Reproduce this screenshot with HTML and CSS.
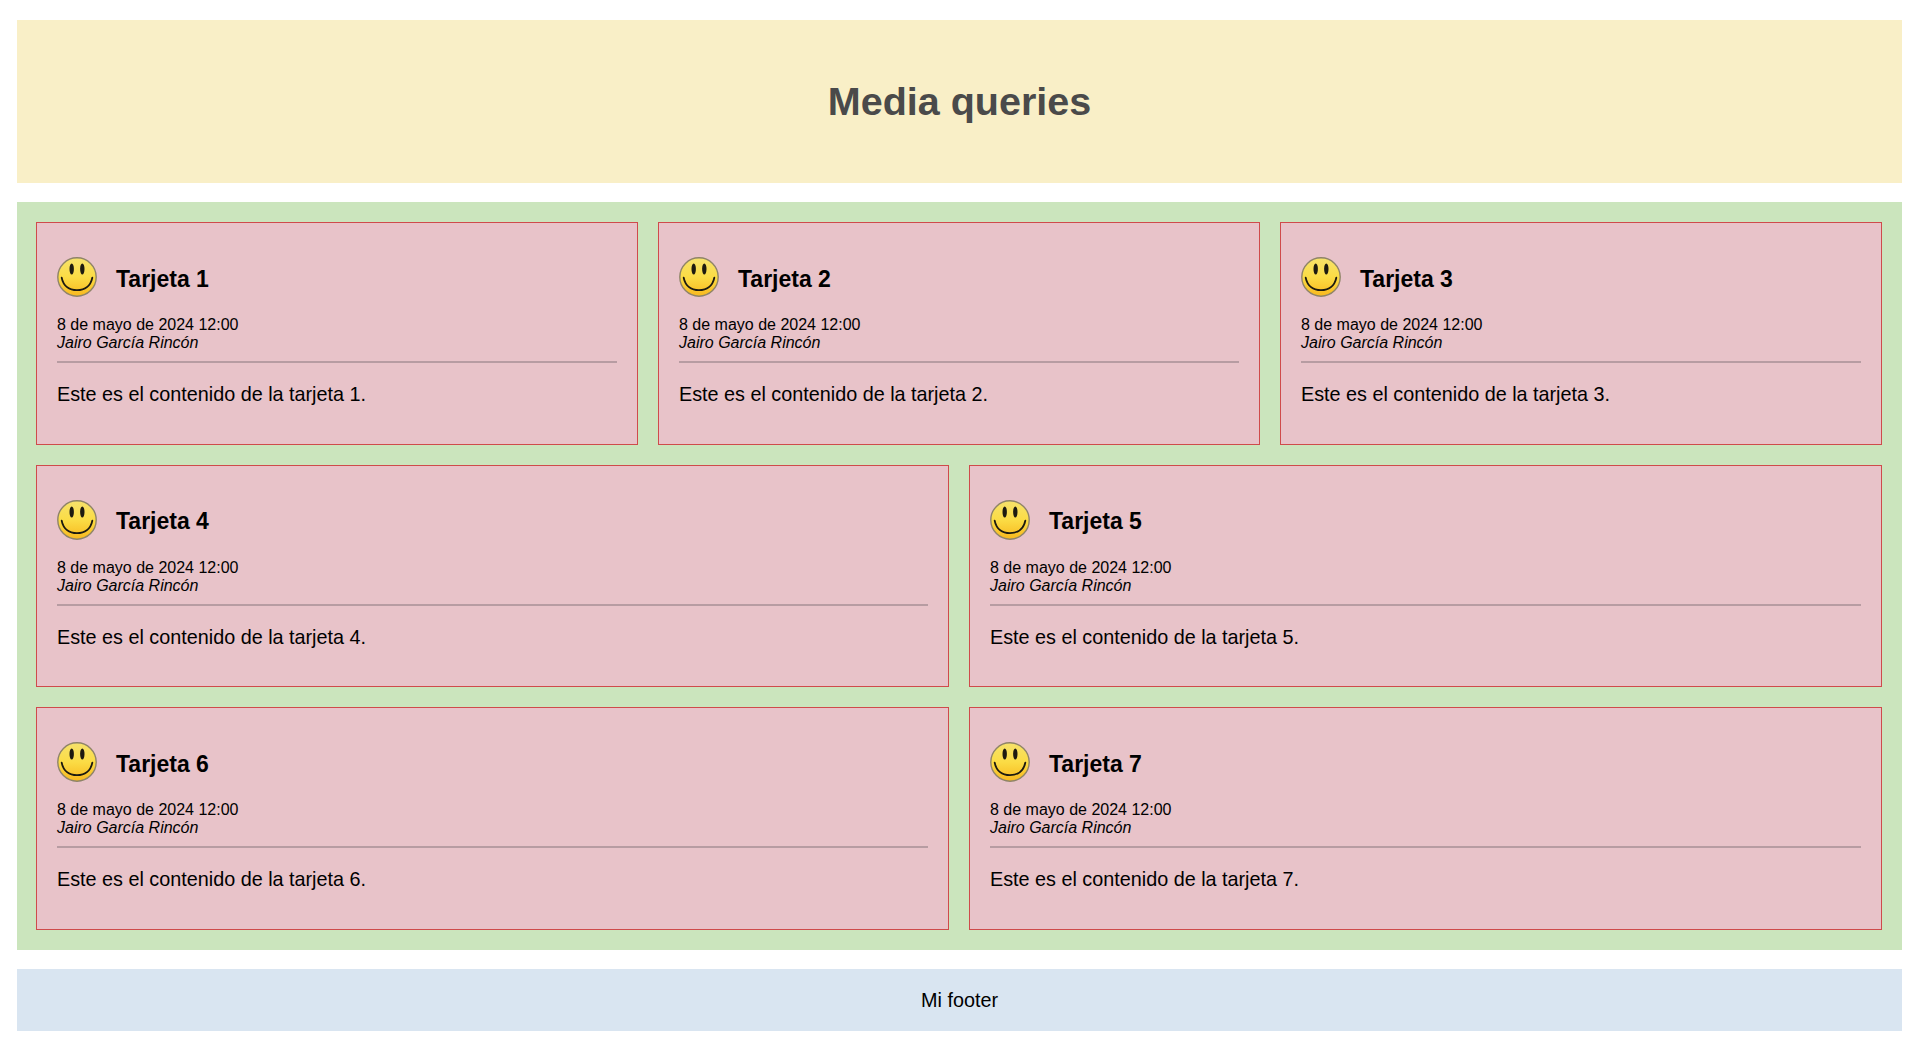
FILE: index.html
```html
<!DOCTYPE html>
<html lang="es">
<head>
  <meta charset="UTF-8">
  <meta name="viewport" content="width=device-width, initial-scale=1.0">
  <title>Media queries</title>
  <link rel="stylesheet" href="styles.css">
</head>
<body>
  <svg class="defs" width="0" height="0">
    <defs>
      <linearGradient id="smile-fill" x1="0" y1="0" x2="0" y2="1">
        <stop offset="0" stop-color="#f6e26b"/>
        <stop offset="0.5" stop-color="#fbdc45"/>
        <stop offset="1" stop-color="#f8b81e"/>
      </linearGradient>
      <symbol id="smile" viewBox="0 0 40 40">
        <circle cx="20" cy="20" r="19.2" fill="url(#smile-fill)" stroke="#8f8468" stroke-width="1.4"/>
        <ellipse cx="14.7" cy="12" rx="2.200" ry="5.500" fill="#1c1a10"/>
        <ellipse cx="25.300" cy="12" rx="2.200" ry="5.500" fill="#1c1a10"/>
        <path d="M4.700 20.700c1.600 8 7.500 12.500 15.300 12.500s13.700-4.500 15.300-12.500" fill="none" stroke="#1c1a10" stroke-width="1.800" stroke-linecap="round"/>
      </symbol>
    </defs>
  </svg>

  <header class="header">
    <h1>Media queries</h1>
  </header>

  <main class="cards">
    <article class="card">
      <div class="card-head"><svg class="avatar"><use href="#smile"/></svg><h2>Tarjeta 1</h2></div>
      <p class="date">8 de mayo de 2024 12:00</p>
      <p class="author">Jairo García Rincón</p>
      <hr>
      <p class="content">Este es el contenido de la tarjeta 1.</p>
    </article>
    <article class="card">
      <div class="card-head"><svg class="avatar"><use href="#smile"/></svg><h2>Tarjeta 2</h2></div>
      <p class="date">8 de mayo de 2024 12:00</p>
      <p class="author">Jairo García Rincón</p>
      <hr>
      <p class="content">Este es el contenido de la tarjeta 2.</p>
    </article>
    <article class="card">
      <div class="card-head"><svg class="avatar"><use href="#smile"/></svg><h2>Tarjeta 3</h2></div>
      <p class="date">8 de mayo de 2024 12:00</p>
      <p class="author">Jairo García Rincón</p>
      <hr>
      <p class="content">Este es el contenido de la tarjeta 3.</p>
    </article>
    <article class="card wide">
      <div class="card-head"><svg class="avatar"><use href="#smile"/></svg><h2>Tarjeta 4</h2></div>
      <p class="date">8 de mayo de 2024 12:00</p>
      <p class="author">Jairo García Rincón</p>
      <hr>
      <p class="content">Este es el contenido de la tarjeta 4.</p>
    </article>
    <article class="card wide">
      <div class="card-head"><svg class="avatar"><use href="#smile"/></svg><h2>Tarjeta 5</h2></div>
      <p class="date">8 de mayo de 2024 12:00</p>
      <p class="author">Jairo García Rincón</p>
      <hr>
      <p class="content">Este es el contenido de la tarjeta 5.</p>
    </article>
    <article class="card wide">
      <div class="card-head"><svg class="avatar"><use href="#smile"/></svg><h2>Tarjeta 6</h2></div>
      <p class="date">8 de mayo de 2024 12:00</p>
      <p class="author">Jairo García Rincón</p>
      <hr>
      <p class="content">Este es el contenido de la tarjeta 6.</p>
    </article>
    <article class="card wide">
      <div class="card-head"><svg class="avatar"><use href="#smile"/></svg><h2>Tarjeta 7</h2></div>
      <p class="date">8 de mayo de 2024 12:00</p>
      <p class="author">Jairo García Rincón</p>
      <hr>
      <p class="content">Este es el contenido de la tarjeta 7.</p>
    </article>
  </main>

  <footer class="footer">Mi footer</footer>
</body>
</html>
```

FILE: styles.css
```css
html, body {
  margin: 0;
  padding: 0;
}

body {
  padding: 20px 18px 29px 17px;
  font-family: "Liberation Sans", Arial, sans-serif;
  color: #000;
  background-color: #fff;
}

.defs {
  display: block;
  position: absolute;
}

.header {
  display: flex;
  align-items: center;
  justify-content: center;
  height: 163px;
  margin-bottom: 19px;
  background-color: #f9efc7;
}

.header h1 {
  margin: 0;
  font-size: 39.5px;
  color: #4a4a4a;
}

.cards {
  display: grid;
  grid-template-columns: repeat(6, 1fr);
  gap: 20px;
  padding: 20px 20px 20px 19px;
  margin-bottom: 19.2px;
  background-color: #cbe5bd;
}

.card {
  grid-column: span 2;
  box-sizing: border-box;
  height: 222.6px;
  padding: 20px;
  background-color: #e8c3c9;
  border: 1px solid #cf4b4b;
}

.card.wide {
  grid-column: span 3;
}

.card-head {
  display: flex;
  align-items: center;
  gap: 19px;
  height: 50px;
  margin-top: 9px;
  margin-bottom: 14px;
}

.avatar {
  width: 40px;
  height: 40px;
  flex: none;
}

.card-head h2 {
  margin: 4px 0 0;
  font-size: 23px;
}

.date,
.author {
  margin: 0;
  font-size: 16px;
  line-height: 18px;
}

.author {
  font-style: italic;
}

hr {
  height: 2px;
  margin: 9px 0 20px;
  border: 0;
  background-color: #b79ca2;
}

.content {
  margin: 0;
  font-size: 19.8px;
  line-height: 23px;
}

.footer {
  display: flex;
  align-items: center;
  justify-content: center;
  height: 62.3px;
  font-size: 19.8px;
  background-color: #d9e5f1;
}
```
